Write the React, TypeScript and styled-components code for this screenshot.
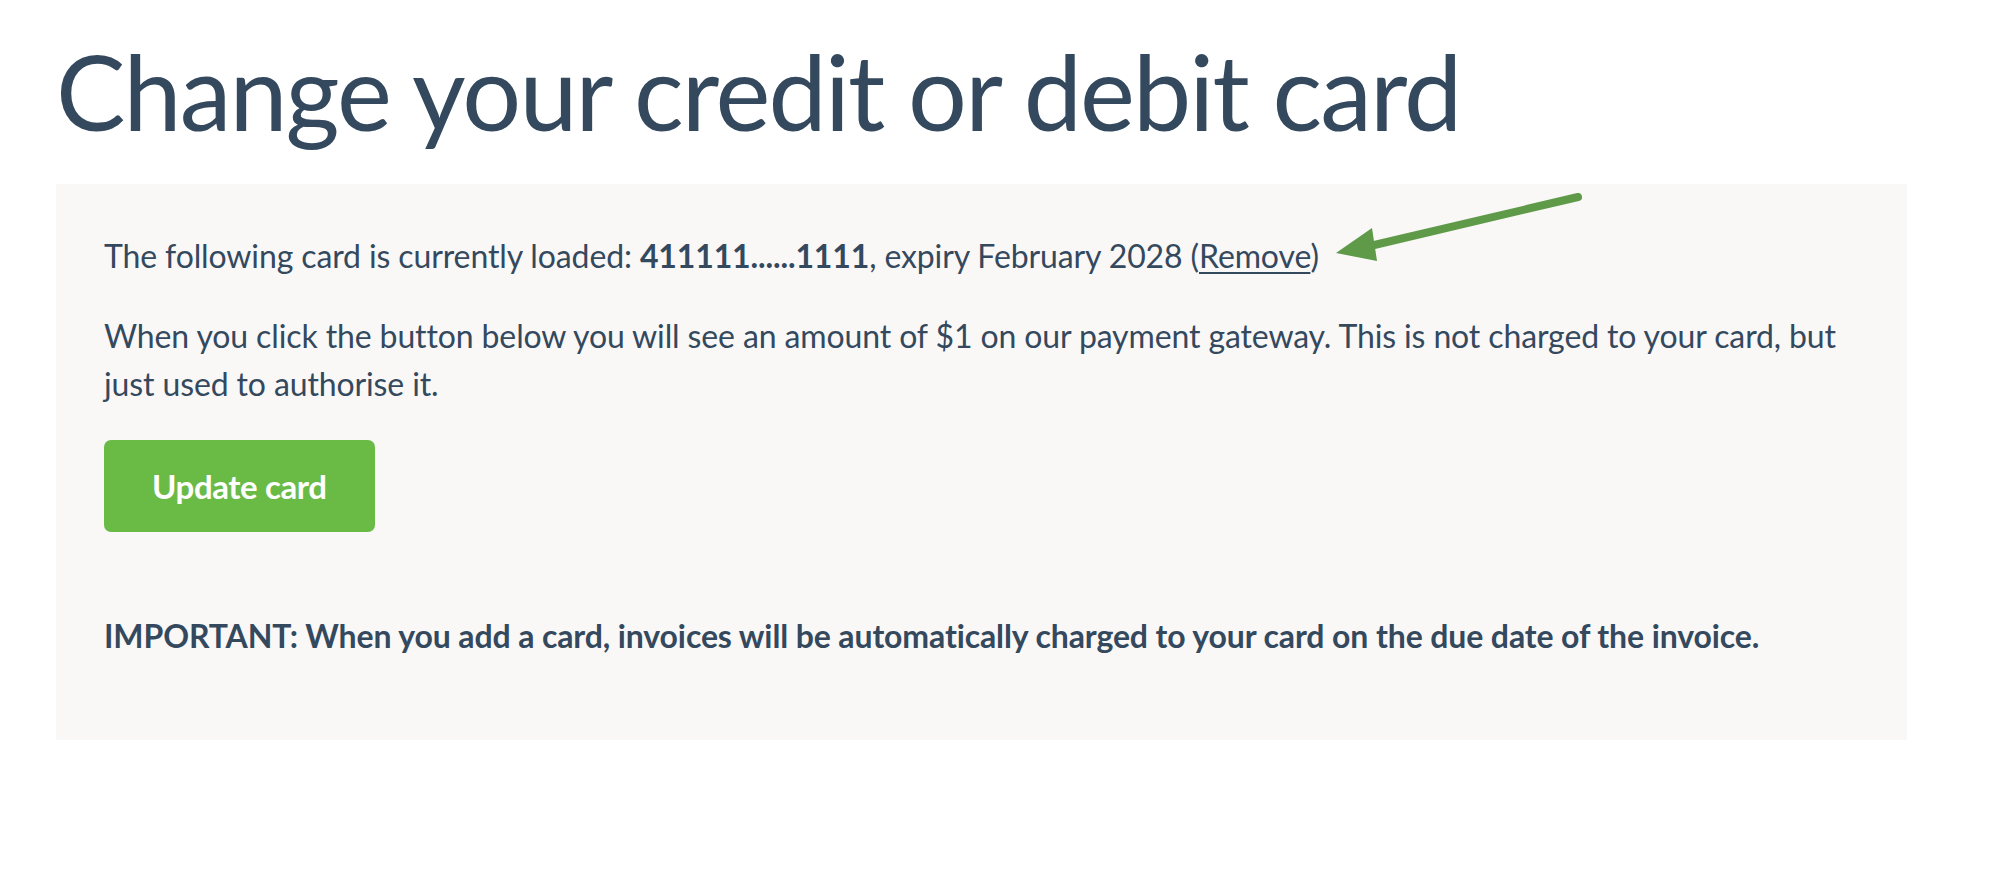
import React from "react";
import styled, { createGlobalStyle } from "styled-components";

const GlobalStyle = createGlobalStyle`
  html, body {
    margin: 0;
    padding: 0;
    background: #ffffff;
  }

  body {
    font-family: Lato, "Open Sans", sans-serif;
    color: #34495e;
  }
`;

const Page = styled.div`
  position: relative;
  padding: 29px 107px 0 56px;
  box-sizing: border-box;
  width: 2014px;
  height: 876px;
`;

const Title = styled.h1`
  font-size: 104px;
  font-weight: 400;
  line-height: 1.2;
  letter-spacing: -1.9px;
  margin: 0 0 30px 0;
  color: #34495e;
`;

const Panel = styled.section`
  background: #f9f8f7;
  padding: 48px 48px 80px;
  box-sizing: border-box;
  width: 1851px;
`;

const Text = styled.p<{ $bold?: boolean }>`
  font-size: 32px;
  line-height: 48px;
  letter-spacing: -0.12px;
  margin: 0 0 32px 0;
  font-weight: ${({ $bold }) => ($bold ? 700 : 400)};

  &:last-child {
    margin-bottom: 0;
  }
`;

const RemoveLink = styled.a`
  color: #34495e;
  text-decoration: underline;
  text-underline-offset: 4px;
  text-decoration-thickness: 2px;
  cursor: pointer;
`;

const ButtonRow = styled.div`
  margin: 0 0 80px 0;
`;

const UpdateButton = styled.button`
  background: #6abb46;
  color: #ffffff;
  border: none;
  border-radius: 7px;
  font-family: Lato, "Open Sans", sans-serif;
  font-size: 33px;
  font-weight: 700;
  line-height: 48px;
  letter-spacing: -0.4px;
  padding: 22px 48px;
  cursor: pointer;
`;

const Arrow = styled.svg`
  position: absolute;
  left: 1320px;
  top: 180px;
  overflow: visible;
`;

export default function App() {
  return (
    <>
      <GlobalStyle />
      <Page>
        <Title>Change your credit or debit card</Title>
        <Panel>
          <Text>
            The following card is currently loaded: <strong>411111......1111</strong>, expiry
            February 2028 (<RemoveLink>Remove</RemoveLink>)
          </Text>
          <Text>
            When you click the button below you will see an amount of $1 on our payment gateway.
            This is not charged to your card, but just used to authorise it.
          </Text>
          <ButtonRow>
            <UpdateButton>Update card</UpdateButton>
          </ButtonRow>
          <Text $bold>
            IMPORTANT: When you add a card, invoices will be automatically charged to your card on
            the due date of the invoice.
          </Text>
        </Panel>
        <Arrow width="280" height="90" viewBox="0 0 280 90">
          <line
            x1="258"
            y1="17"
            x2="50"
            y2="66"
            stroke="#5f9a48"
            strokeWidth="8"
            strokeLinecap="round"
          />
          <polygon points="16,73 52,48 57,81" fill="#5f9a48" />
        </Arrow>
      </Page>
    </>
  );
}
